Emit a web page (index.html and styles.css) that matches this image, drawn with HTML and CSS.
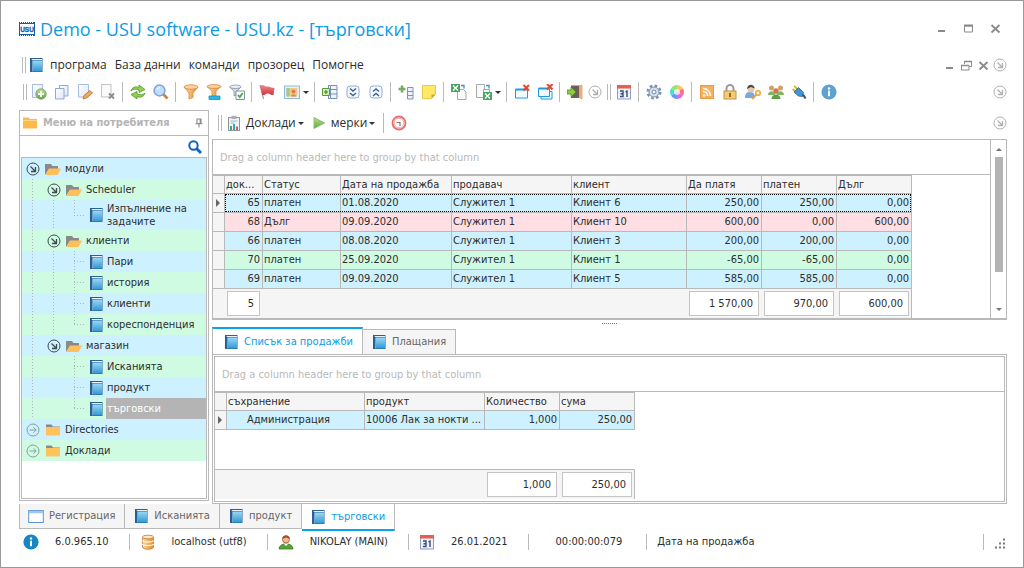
FILE: index.html
```html
<!DOCTYPE html>
<html lang="bg">
<head>
<meta charset="utf-8">
<title>Demo - USU software - USU.kz - [търговски]</title>
<link rel="stylesheet" href="styles.css">
</head>
<body>
<svg class="defs" aria-hidden="true">
  <defs>
    <linearGradient id="gBook" x1="0" y1="0" x2="0" y2="1"><stop offset="0" stop-color="#9ad8f5"/><stop offset="1" stop-color="#2f97d6"/></linearGradient>
    <linearGradient id="gOrange" x1="0" y1="0" x2="1" y2="0"><stop offset="0" stop-color="#ffd9a0"/><stop offset="1" stop-color="#ea8a2c"/></linearGradient>
    <linearGradient id="gGreen" x1="0" y1="0" x2="0" y2="1"><stop offset="0" stop-color="#b9e08a"/><stop offset="1" stop-color="#5da83a"/></linearGradient>
    <linearGradient id="gPage" x1="0" y1="0" x2="1" y2="1"><stop offset="0" stop-color="#fff"/><stop offset="1" stop-color="#dde6f5"/></linearGradient>
    <linearGradient id="gRed" x1="0" y1="0" x2="0" y2="1"><stop offset="0" stop-color="#f28a8a"/><stop offset="1" stop-color="#cf3340"/></linearGradient>
    <symbol id="book" viewBox="0 0 16 16"><rect x="2" y="1" width="12.500" height="14" fill="#2a5f95"/><rect x="5" y="3.500" width="9" height="11" fill="url(#gBook)"/><path d="M3.500 2h10.500v1h-10z" fill="#e8f4fb"/><path d="M4.500 3.500v11" stroke="#8cb9dc" stroke-width=".8"/></symbol>
    <symbol id="open" viewBox="0 0 16 14"><path d="M0 13V2h6l1.500 2H13v3H4z" fill="#8a8a8a"/><path d="M4 6.500h12L12.500 13H.5z" fill="#ffbf5a"/></symbol>
    <symbol id="folder" viewBox="0 0 16 14"><path d="M1 5V1.500h5.500l1.500 2h7V5z" fill="#8a8a8a"/><path d="M1 4h14v8.500H1z" fill="#ffc25c"/></symbol>
    <symbol id="folderY" viewBox="0 0 16 14"><path d="M1 12.500V1.500h5.500l1.500 1.500h7v9.500z" fill="#fdb94c"/><path d="M1 4.500h14" stroke="#ffd58a"/></symbol>
    <symbol id="down" viewBox="0 0 14 14"><circle cx="7" cy="7" r="6" fill="none" stroke="currentColor"/><path d="M4.500 4.500l4.500 4.500M9.500 5v4.500H5" fill="none" stroke="currentColor" stroke-width="1.300"/></symbol>
    <symbol id="right" viewBox="0 0 14 14"><circle cx="7" cy="7" r="6" fill="none" stroke="currentColor"/><path d="M3.500 7h6.500M7.500 4.300L10.200 7 7.500 9.700" fill="none" stroke="currentColor"/></symbol>
    <symbol id="min" viewBox="0 0 11 11"><path d="M2 8h7" stroke="#8a8a8a" stroke-width="2"/></symbol>
    <symbol id="max" viewBox="0 0 11 11"><path d="M1.500 2v7h8V2M1 3h9" fill="none" stroke="#8a8a8a"/><path d="M1 2.500h9" stroke="#8a8a8a" stroke-width="2"/></symbol>
    <symbol id="restore" viewBox="0 0 11 11"><path d="M3.500 4V1.500h7v5H8M1 5.500h7v4.500H.5V5z" fill="none" stroke="#8a8a8a"/><path d="M3 1.500h8M0 5.500h8" stroke="#8a8a8a" stroke-width="1.500"/></symbol>
    <symbol id="close" viewBox="0 0 11 11"><path d="M1.500 2l8 7.500M9.500 2l-8 7.500" stroke="#8a8a8a" stroke-width="1.800"/></symbol>
    <symbol id="add" viewBox="0 0 16 16"><path d="M1.500 .5h10v13h-10z" fill="url(#gPage)" stroke="#a9bbdf"/><circle cx="10" cy="10" r="5.200" fill="url(#gGreen)" stroke="#8aa888"/><path d="M10 7v6M7 10h6" stroke="#fff" stroke-width="2"/></symbol>
    <symbol id="copy" viewBox="0 0 16 16"><path d="M5.500 1.500h8.500v10.500H5.500z" fill="url(#gPage)" stroke="#93a9d3"/><path d="M1.500 4.500H10v10.500H1.500z" fill="url(#gPage)" stroke="#93a9d3"/></symbol>
    <symbol id="edit" viewBox="0 0 16 16"><path d="M1.500 .5h10v12.500h-10z" fill="url(#gPage)" stroke="#a9bbdf"/><path d="M6 15l1-3.500 6-5 2.500 2.500-6 5z" fill="#f3a95a" stroke="#a86d34" stroke-width=".8"/></symbol>
    <symbol id="del" viewBox="0 0 16 16"><path d="M1.500 .5H11v12.500H1.500z" fill="#fafafa" stroke="#c2c2c2"/><path d="M9 9.500l5 5M14 9.500l-5 5" stroke="#8d8d8d" stroke-width="2"/></symbol>
    <symbol id="refresh" viewBox="0 0 16 16"><path d="M1 7c1-4 5-5 8-3.500V1l6 4.500-6 3V6C6 4.800 3 5 1 7z" fill="#92d050" stroke="#4f9a28" stroke-width=".8"/><path d="M15 9c-1 4-5 5-8 3.500V15L1 10.500l6-3V10c3 1.200 6 1 8-1z" fill="#92d050" stroke="#4f9a28" stroke-width=".8"/></symbol>
    <symbol id="loupe" viewBox="0 0 16 16"><path d="M9.500 9.500l5 5" stroke="#c48447" stroke-width="2.600"/><circle cx="6.500" cy="6.500" r="5.400" fill="#bfe0fb" stroke="#7fa2da" stroke-width="1.500"/><path d="M4 6a3 3 0 0 1 3-2.500" stroke="#fff" fill="none"/></symbol>
    <symbol id="funnel" viewBox="0 0 16 16"><path d="M1 3L6 9v6l4-1.500V9L15 3z" fill="url(#gOrange)" stroke="#d28a45" stroke-width=".8"/><ellipse cx="8" cy="3" rx="7" ry="2.200" fill="#ffd0a0" stroke="#d28a45" stroke-width=".8"/></symbol>
    <symbol id="funnel2" viewBox="0 0 16 16"><path d="M1 2.500L6 7v5h4V7l5-4.500z" fill="url(#gOrange)" stroke="#d28a45" stroke-width=".8"/><ellipse cx="8" cy="2.500" rx="7" ry="1.900" fill="#ffd0a0" stroke="#d28a45" stroke-width=".8"/><path d="M3 12h11v3.500H3z" fill="#29b6e8" stroke="#1790bd" stroke-width=".8"/></symbol>
    <symbol id="funnel3" viewBox="0 0 16 16"><path d="M.8 3L5 7.500V12l2.500-1V7.500L12 3z" fill="#d3d8de" stroke="#8292a8" stroke-width=".8"/><ellipse cx="6.400" cy="2.800" rx="5.600" ry="1.700" fill="#edf0f4" stroke="#8292a8" stroke-width=".8"/><path d="M7 7h8.500v8.500H7z" fill="#fff" stroke="#7f92ab"/><path d="M9 11l1.800 2 3-4" fill="none" stroke="#3fae38" stroke-width="1.800"/></symbol>
    <symbol id="flag" viewBox="0 0 16 16"><path d="M1 1l3.500 14" stroke="#9d9d9d" stroke-width="1.200"/><path d="M1 1.500c3-2 5 1.500 8 1 2 0 3 1.500 6.500 1.500l-1 7c-3 .5-4-2-6-1.500-2 .3-3 2-5.200 1.500z" fill="url(#gRed)"/></symbol>
    <symbol id="pic" viewBox="0 0 16 16"><rect x=".5" y="2" width="15" height="12.500" fill="#e4f2ff" stroke="#8fb9e0"/><rect x="2.500" y="4" width="11" height="8.500" fill="#f5c983"/><path d="M2.500 4h3v8.500h-3z" fill="#9cc98a"/><path d="M7 12.500c0-3 5-3 5 0z" fill="#d98b4b"/><circle cx="9.500" cy="7.500" r="2" fill="#dd8050"/></symbol>
    <symbol id="expand" viewBox="0 0 16 16"><path d="M8.500 1.500h6.500v13H8.500zM8.500 5.500h6.500M8.500 10h6.500M6 1.500h2M6 14.500h2M6.500 2v3M6.500 11v3" fill="#eef3fb" stroke="#7690bd"/><path d="M.5 4.500h7v7h-7z" fill="#d6efb9" stroke="#5b9b3b"/><path d="M4 6v4M2 8h4" stroke="#3f8a24" stroke-width="1.200"/></symbol>
    <symbol id="chD" viewBox="0 0 16 16"><rect x="2" y="2" width="12" height="12" rx="3" fill="#f4f9ff" stroke="#8fadd8"/><path d="M5 4.500L8 7l3-2.500M5 9l3 2.500L11 9" fill="none" stroke="#3f5f8e" stroke-width="1.400"/></symbol>
    <symbol id="chU" viewBox="0 0 16 16"><rect x="2" y="2" width="12" height="12" rx="3" fill="#f4f9ff" stroke="#8fadd8"/><path d="M5 7.500L8 5l3 2.500M5 12l3-2.500L11 12" fill="none" stroke="#3f5f8e" stroke-width="1.400"/></symbol>
    <symbol id="addcol" viewBox="0 0 16 16"><path d="M9.500 3.500h5.500v11.500H9.500zM9.500 7.500h5.500M9.500 11.500h5.500" fill="#eef1fb" stroke="#7f8fc4"/><path d="M4 1.500v7M.5 5h7" stroke="#7aab62" stroke-width="2.600"/></symbol>
    <symbol id="note" viewBox="0 0 16 16"><path d="M1.500 1.500h13v9l-4 4h-9z" fill="#ffe966" stroke="#e6ca4e"/><path d="M14.500 10.500h-4v4z" fill="#d6a92a"/></symbol>
    <symbol id="xls1" viewBox="0 0 16 16"><path d="M6.500 5.500h6l2.500 2.500v7.500H6.500z" fill="#fafafa" stroke="#a4a9ae"/><rect x="0" y="0" width="9" height="8" fill="#4aa564"/><path d="M2 1.500l5 5M7 1.500l-5 5" stroke="#fff" stroke-width="1.300"/><path d="M10 1.500h3v3" fill="none" stroke="#3b8ed0" stroke-width="1.300"/></symbol>
    <symbol id="xls2" viewBox="0 0 16 16"><path d="M.5 .5h8v13h-8z" fill="#fafafa" stroke="#a4a9ae"/><path d="M7.500 5.500h6v6h-6z" fill="#f3f3f3" stroke="#a4a9ae"/><rect x="7" y="8" width="9" height="8" fill="#4aa564"/><path d="M9 9.500l5 5M14 9.500l-5 5" stroke="#fff" stroke-width="1.300"/><path d="M10 1.500h3v3" fill="none" stroke="#3b8ed0" stroke-width="1.300"/></symbol>
    <symbol id="winx" viewBox="0 0 16 16"><path d="M1.500 5.500h12v8.500h-12z" fill="#f2faff" stroke="#1b9ae0"/><path d="M1.500 5.500h12" stroke="#1b9ae0" stroke-width="2"/><path d="M9.500 1l5.500 5.500M15 1L9.500 6.500" stroke="#dd4b33" stroke-width="2"/></symbol>
    <symbol id="winxs" viewBox="0 0 16 16"><path d="M4 7.500h11V15H4z" fill="#fff" stroke="#1b9ae0"/><path d="M1.500 4.500h11v8h-11z" fill="#f2faff" stroke="#1b9ae0"/><path d="M1.500 4.500h11" stroke="#1b9ae0" stroke-width="2"/><path d="M10 0l5.500 5.500M15.500 0L10 5.500" stroke="#dd4b33" stroke-width="2"/></symbol>
    <symbol id="exit" viewBox="0 0 16 16"><path d="M4 1.500h9v12.500H4z" fill="#6d5f57"/><path d="M12 1.500L15.500.5v15L12 14z" fill="#e3b07c"/><path d="M0 6h4V3l5 5-5 5v-3H0z" fill="#8bcf3d" stroke="#4d8c20" stroke-width=".8"/></symbol>
    <symbol id="cal" viewBox="0 0 16 16"><rect x="1.500" y="1.500" width="13" height="13.500" fill="#eef2fb" stroke="#8f9cc8"/><path d="M1 1h14v3.500H1z" fill="#e5604f"/><path d="M4 7h3v5.500H4M4.500 9.700H7M9.500 8l1.500-1v6" fill="none" stroke="#3d4d7c" stroke-width="1.400"/></symbol>
    <symbol id="gear" viewBox="0 0 16 16"><circle cx="8" cy="8" r="6.400" fill="none" stroke="#7b8fac" stroke-width="2.200" stroke-dasharray="2.700 2.300"/><circle cx="8" cy="8" r="5" fill="#d6e2f0" stroke="#7b8fac"/><circle cx="8" cy="8" r="2" fill="#fff" stroke="#6d85a8"/></symbol>
    <symbol id="pal" viewBox="0 0 16 16"><path d="M8 8V1a7 7 0 0 1 6 3.500z" fill="#ffc26b"/><path d="M8 8l6-3.500a7 7 0 0 1 0 7z" fill="#ff6f83"/><path d="M8 8l6 3.500A7 7 0 0 1 8 15z" fill="#e967dd"/><path d="M8 8v7a7 7 0 0 1-6-3.500z" fill="#6e93f5"/><path d="M8 8l-6 3.500a7 7 0 0 1 0-7z" fill="#45dcd9"/><path d="M8 8L2 4.500A7 7 0 0 1 8 1z" fill="#91e96a"/><circle cx="8" cy="8" r="3" fill="#fff" opacity=".7"/></symbol>
    <symbol id="rss" viewBox="0 0 16 16"><rect x="1.500" y="1.500" width="13" height="13" fill="#f9b05c" stroke="#e59a44"/><circle cx="5" cy="11.500" r="1.300" fill="#fff"/><path d="M4 7.500a4.500 4.500 0 0 1 4.500 4.500M4 4.500a7.500 7.500 0 0 1 7.500 7.500" fill="none" stroke="#fff" stroke-width="1.500"/></symbol>
    <symbol id="lock" viewBox="0 0 16 16"><path d="M4.500 8V4.500a3.500 3.500 0 0 1 7 0V8" fill="none" stroke="#9b9b9b" stroke-width="2"/><rect x="2" y="7" width="12" height="8" fill="#f6cb70" stroke="#c3924a"/><path d="M8 9v4" stroke="#6f562a" stroke-width="1.600"/></symbol>
    <symbol id="key" viewBox="0 0 16 16"><path d="M0 14c0-5 2-6 5-6s5 1 5 6z" fill="#77a9de"/><circle cx="6" cy="5" r="3.500" fill="#f1c59f"/><path d="M2 5C2.500-.5 9-.5 9.700 4.500L6 3z" fill="#444b55"/><circle cx="13" cy="9" r="2.200" fill="none" stroke="#f0a52b" stroke-width="1.600"/><path d="M11.500 10.500L8 14.500l-1-1" stroke="#f0a52b" stroke-width="1.800" fill="none"/></symbol>
    <symbol id="group" viewBox="0 0 16 16"><circle cx="3.500" cy="4" r="2.500" fill="#d99b6b"/><circle cx="12.500" cy="4" r="2.500" fill="#d99b6b"/><path d="M0 11c0-5 7-5 7 0zM9 11c0-5 7-5 7 0z" fill="#7fb764"/><circle cx="8" cy="7" r="2.700" fill="#c9774b"/><path d="M3.500 15c0-6 9-6 9 0z" fill="#5ea04a"/></symbol>
    <symbol id="plug" viewBox="0 0 16 16"><path d="M3 2l3.500 3M1.500 5L5 8" stroke="#e2b52e" stroke-width="1.800"/><path d="M7.500 3.500l5 5-1 4-4-.5-4.500-4z" fill="#3e97d4" stroke="#275f95" stroke-width=".8"/><path d="M12 10.500l2.500 4" stroke="#414d5b" stroke-width="2"/></symbol>
    <symbol id="info" viewBox="0 0 16 16"><circle cx="8" cy="8" r="7.600" fill="currentColor"/><circle cx="8" cy="4.500" r="1.200" fill="#fff"/><path d="M8 6.700v5.500" stroke="#fff" stroke-width="2"/></symbol>
    <symbol id="report" viewBox="0 0 16 16"><rect x="2.500" y="2.500" width="11" height="13" fill="#f1f3f5" stroke="#8d959d"/><rect x="5.500" y=".8" width="5" height="3.200" fill="#a8afb6"/><path d="M4.500 6h7M4.500 8h4" stroke="#b2b8be"/><path d="M5 11v4" stroke="#49a84b" stroke-width="2"/><path d="M8 9v6" stroke="#2aa7dd" stroke-width="2"/><path d="M11 11.500V15" stroke="#e0584d" stroke-width="2"/></symbol>
    <symbol id="play" viewBox="0 0 16 16"><path d="M3 2.500l10.500 5.500L3 13.500z" fill="url(#gGreen)" stroke="#8cbb74"/></symbol>
    <symbol id="clock" viewBox="0 0 16 16"><circle cx="8" cy="8" r="6.500" fill="#fff" stroke="#e0706a" stroke-width="1.800"/><circle cx="8" cy="8" r="4.800" fill="none" stroke="#f0a5a0"/><path d="M5.500 7.500h3.500V11" fill="none" stroke="#9a6b68" stroke-width="1.200"/></symbol>
    <symbol id="window" viewBox="0 0 16 16"><rect x=".7" y="2.500" width="14.600" height="12" fill="#fff" stroke="#5f93cc"/><path d="M1.200 4h13.600" stroke="#9cc7ee" stroke-width="2.500"/></symbol>
    <symbol id="db" viewBox="0 0 16 16"><path d="M2.500 3v10c0 3 11 3 11 0V3z" fill="url(#gOrange)" stroke="#c07c36" stroke-width=".8"/><ellipse cx="8" cy="3" rx="5.500" ry="1.800" fill="#ffe9c6" stroke="#c07c36" stroke-width=".8"/><path d="M2.500 6.500c1 2 10 2 11 0M2.500 10c1 2 10 2 11 0" fill="none" stroke="#fff" stroke-width="1.200"/></symbol>
    <symbol id="user" viewBox="0 0 16 16"><path d="M1 15c0-7 14-7 14 0z" fill="#57a339" stroke="#3b7a26" stroke-width=".8"/><path d="M5.500 9.500l2.500 2.500 2.500-2.500z" fill="#fff"/><circle cx="8" cy="5.500" r="3.500" fill="#f0b98a" stroke="#9a5c38" stroke-width=".8"/><path d="M4.300 5C4 0 12 0 11.700 5L8 3.500z" fill="#a0522d"/></symbol>
    <symbol id="pin" viewBox="0 0 10 10"><path d="M3 1h4v4.500H3zM1.500 5.800h7M5 6v3.500M6.200 1v4.500" fill="none" stroke="#8a8a8a" stroke-width="1.100"/></symbol>
    <symbol id="search" viewBox="0 0 14 14"><circle cx="5.500" cy="5.500" r="4.200" fill="none" stroke="#0b64c0" stroke-width="2"/><path d="M8.500 8.500l4.500 4.500" stroke="#0b64c0" stroke-width="2.800"/></symbol>
    <symbol id="logo" viewBox="0 0 16 16"><path d="M.5 1v14M15.500 1v14M0 2.500h16M0 13.500h16" stroke="#0f5fae"/><path d="M0 1.500h16M0 14.500h16" stroke="#0f5fae" stroke-dasharray="1 1"/><rect x="1" y="3" width="14" height="10" fill="#fff"/><text x="8" y="10.500" text-anchor="middle" font-family="Liberation Sans" font-size="6.500" font-weight="700" fill="#0f5fae" stroke="#0f5fae" stroke-width=".3">USU</text></symbol>
    <symbol id="size" viewBox="0 0 12 12"><path d="M9 1.500h2M9 5.500h2M5 5.500h2M9 9.500h2M5 9.500h2M1 9.500h2" stroke="#777" stroke-width="2"/></symbol>
  </defs>
</svg>

<div class="window">
  <header class="titlebar">
    <svg class="ico logo"><use href="#logo"/></svg>
    <h1>Demo - USU software - USU.kz - [търговски]</h1>
    <div class="winctl">
      <button aria-label="Minimize"><svg><use href="#min"/></svg></button>
      <button aria-label="Maximize"><svg><use href="#max"/></svg></button>
      <button aria-label="Close"><svg><use href="#close"/></svg></button>
    </div>
  </header>

  <nav class="menubar">
    <span class="grip"></span>
    <svg class="ico"><use href="#book"/></svg>
    <button>програма</button><button>База данни</button><button>команди</button><button>прозорец</button><button>Помогне</button>
    <div class="mdictl">
      <button aria-label="Minimize"><svg><use href="#min"/></svg></button>
      <button aria-label="Restore"><svg><use href="#restore"/></svg></button>
      <button aria-label="Close"><svg><use href="#close"/></svg></button>
      <button class="more" aria-label="More"><svg><use href="#down"/></svg></button>
    </div>
  </nav>

  <div class="toolbar">
    <span class="grip"></span>
    <button class="tb" aria-label="Add"><svg class="ico"><use href="#add"/></svg></button>
    <button class="tb" aria-label="Copy"><svg class="ico"><use href="#copy"/></svg></button>
    <button class="tb" aria-label="Edit"><svg class="ico"><use href="#edit"/></svg></button>
    <button class="tb" aria-label="Delete"><svg class="ico"><use href="#del"/></svg></button>
    <span class="sep"></span>
    <button class="tb" aria-label="Refresh"><svg class="ico"><use href="#refresh"/></svg></button>
    <button class="tb" aria-label="Find"><svg class="ico"><use href="#loupe"/></svg></button>
    <span class="sep"></span>
    <button class="tb" aria-label="Filter"><svg class="ico"><use href="#funnel"/></svg></button>
    <button class="tb" aria-label="Filter row"><svg class="ico"><use href="#funnel2"/></svg></button>
    <button class="tb" aria-label="Filter by value"><svg class="ico"><use href="#funnel3"/></svg></button>
    <span class="sep"></span>
    <button class="tb" aria-label="Flag"><svg class="ico"><use href="#flag"/></svg></button>
    <button class="tb drop" aria-label="Image"><svg class="ico"><use href="#pic"/></svg><span class="caret"></span></button>
    <span class="sep"></span>
    <button class="tb" aria-label="Groups"><svg class="ico"><use href="#expand"/></svg></button>
    <button class="tb" aria-label="Expand all"><svg class="ico"><use href="#chD"/></svg></button>
    <button class="tb" aria-label="Collapse all"><svg class="ico"><use href="#chU"/></svg></button>
    <span class="sep"></span>
    <button class="tb" aria-label="Columns"><svg class="ico"><use href="#addcol"/></svg></button>
    <button class="tb" aria-label="Note"><svg class="ico"><use href="#note"/></svg></button>
    <span class="sep"></span>
    <button class="tb" aria-label="Import"><svg class="ico"><use href="#xls1"/></svg></button>
    <button class="tb drop" aria-label="Export"><svg class="ico"><use href="#xls2"/></svg><span class="caret"></span></button>
    <span class="sep"></span>
    <button class="tb" aria-label="Close window"><svg class="ico"><use href="#winx"/></svg></button>
    <button class="tb" aria-label="Close all windows"><svg class="ico"><use href="#winxs"/></svg></button>
    <span class="sep"></span>
    <button class="tb" aria-label="Exit"><svg class="ico"><use href="#exit"/></svg></button>
    <button class="more mid" aria-label="More"><svg><use href="#down"/></svg></button>
    <span class="grip"></span>
    <button class="tb" aria-label="Calendar"><svg class="ico"><use href="#cal"/></svg></button>
    <span class="sep"></span>
    <button class="tb" aria-label="Settings"><svg class="ico"><use href="#gear"/></svg></button>
    <button class="tb" aria-label="Colors"><svg class="ico"><use href="#pal"/></svg></button>
    <span class="sep"></span>
    <button class="tb" aria-label="News"><svg class="ico"><use href="#rss"/></svg></button>
    <button class="tb" aria-label="Lock"><svg class="ico"><use href="#lock"/></svg></button>
    <button class="tb" aria-label="Password"><svg class="ico"><use href="#key"/></svg></button>
    <button class="tb" aria-label="Users"><svg class="ico"><use href="#group"/></svg></button>
    <button class="tb" aria-label="Connection"><svg class="ico"><use href="#plug"/></svg></button>
    <span class="sep"></span>
    <button class="tb about" aria-label="About"><svg class="ico"><use href="#info"/></svg></button>
    <button class="more last" aria-label="More"><svg><use href="#down"/></svg></button>
  </div>

  <div class="work">
    <aside class="side">
      <div class="side-head"><svg class="ico fold"><use href="#folderY"/></svg><h2>Меню на потребителя</h2><button aria-label="Pin"><svg class="pin"><use href="#pin"/></svg></button></div>
      <div class="side-search"><input type="text" aria-label="Search"><button aria-label="Search"><svg class="glass"><use href="#search"/></svg></button></div>
      <ul class="tree">
        <li><button class="tg" aria-label="Collapse"><svg><use href="#down"/></svg></button><span class="ic"><svg class="fold"><use href="#open"/></svg></span><span class="tx">модули</span></li>
        <li><i class="v"></i><button class="tg" aria-label="Collapse"><svg><use href="#down"/></svg></button><span class="ic"><svg class="fold"><use href="#open"/></svg></span><span class="tx">Scheduler</span></li>
        <li><i class="v"></i><i class="v"></i><i class="e"></i><span class="ic"><svg class="ico"><use href="#book"/></svg></span><span class="tx">Изпълнение на задачите</span></li>
        <li><i class="v"></i><button class="tg" aria-label="Collapse"><svg><use href="#down"/></svg></button><span class="ic"><svg class="fold"><use href="#open"/></svg></span><span class="tx">клиенти</span></li>
        <li><i class="v"></i><i class="v"></i><i class="v h"></i><span class="ic"><svg class="ico"><use href="#book"/></svg></span><span class="tx">Пари</span></li>
        <li><i class="v"></i><i class="v"></i><i class="v h"></i><span class="ic"><svg class="ico"><use href="#book"/></svg></span><span class="tx">история</span></li>
        <li><i class="v"></i><i class="v"></i><i class="v h"></i><span class="ic"><svg class="ico"><use href="#book"/></svg></span><span class="tx">клиенти</span></li>
        <li><i class="v"></i><i class="v"></i><i class="e"></i><span class="ic"><svg class="ico"><use href="#book"/></svg></span><span class="tx">кореспонденция</span></li>
        <li><i class="v"></i><button class="tg" aria-label="Collapse"><svg><use href="#down"/></svg></button><span class="ic"><svg class="fold"><use href="#open"/></svg></span><span class="tx">магазин</span></li>
        <li><i class="v"></i><i></i><i class="v h"></i><span class="ic"><svg class="ico"><use href="#book"/></svg></span><span class="tx">Исканията</span></li>
        <li><i class="v"></i><i></i><i class="v h"></i><span class="ic"><svg class="ico"><use href="#book"/></svg></span><span class="tx">продукт</span></li>
        <li><i class="v"></i><i></i><i class="e"></i><span class="ic"><svg class="ico"><use href="#book"/></svg></span><span class="tx sel">търговски</span></li>
        <li><button class="tg off" aria-label="Expand"><svg><use href="#right"/></svg></button><span class="ic"><svg class="fold"><use href="#folder"/></svg></span><span class="tx">Directories</span></li>
        <li><button class="tg off" aria-label="Expand"><svg><use href="#right"/></svg></button><span class="ic"><svg class="fold"><use href="#folder"/></svg></span><span class="tx">Доклади</span></li>
      </ul>
    </aside>

    <main class="content">
      <div class="subbar">
        <span class="grip"></span>
        <button class="txt"><svg class="ico"><use href="#report"/></svg>Доклади<span class="caret"></span></button>
        <button class="txt"><svg class="ico"><use href="#play"/></svg>мерки<span class="caret"></span></button>
        <span class="sep"></span>
        <button class="tb" aria-label="Timer"><svg class="ico"><use href="#clock"/></svg></button>
        <button class="more last" aria-label="More"><svg><use href="#down"/></svg></button>
      </div>

      <section class="grid main-grid">
        <div class="grid-body">
          <div class="group-panel">Drag a column header here to group by that column</div>
          <table class="sales">
            <colgroup><col class="c-mark"><col class="c-doc"><col class="c-st"><col class="c-date"><col class="c-sel"><col class="c-cli"><col class="c-num"><col class="c-num"><col class="c-num"></colgroup>
            <thead><tr><th></th><th>док...</th><th>Статус</th><th>Дата на продажба</th><th>продавач</th><th>клиент</th><th>Да платя</th><th>платен</th><th>Дълг</th></tr></thead>
            <tbody>
              <tr class="blue cur"><th><span class="mark"></span></th><td class="n">65</td><td>платен</td><td>01.08.2020</td><td>Служител 1</td><td>Клиент 6</td><td class="n">250,00</td><td class="n">250,00</td><td class="n">0,00</td></tr>
              <tr class="pink"><th></th><td class="n">68</td><td>Дълг</td><td>09.09.2020</td><td>Служител 1</td><td>Клиент 10</td><td class="n">600,00</td><td class="n">0,00</td><td class="n">600,00</td></tr>
              <tr class="blue"><th></th><td class="n">66</td><td>платен</td><td>08.08.2020</td><td>Служител 1</td><td>Клиент 3</td><td class="n">200,00</td><td class="n">200,00</td><td class="n">0,00</td></tr>
              <tr class="green"><th></th><td class="n">70</td><td>платен</td><td>25.09.2020</td><td>Служител 1</td><td>Клиент 1</td><td class="n">-65,00</td><td class="n">-65,00</td><td class="n">0,00</td></tr>
              <tr class="blue"><th></th><td class="n">69</td><td>платен</td><td>09.09.2020</td><td>Служител 1</td><td>Клиент 5</td><td class="n">585,00</td><td class="n">585,00</td><td class="n">0,00</td></tr>
            </tbody>
            <tfoot><tr><td></td><td><div class="sum">5</div></td><td colspan="4"></td><td><div class="sum">1 570,00</div></td><td><div class="sum">970,00</div></td><td><div class="sum">600,00</div></td></tr></tfoot>
          </table>
        </div>
        <div class="scroll"><button class="up" aria-label="Up"></button><span class="thumb"></span><button class="dn" aria-label="Down"></button></div>
      </section>
      <div class="splitter"></div>

      <div class="tabs" role="tablist">
        <button class="tab on" role="tab" aria-selected="true"><svg class="ico"><use href="#book"/></svg>Списък за продажби</button>
        <button class="tab" role="tab"><svg class="ico"><use href="#book"/></svg>Плащания</button>
      </div>
      <section class="page">
        <div class="grid detail">
          <div class="group-panel">Drag a column header here to group by that column</div>
          <table class="items">
            <colgroup><col class="c-mark"><col class="c-store"><col class="c-prod"><col class="c-num"><col class="c-num"></colgroup>
            <thead><tr><th></th><th>съхранение</th><th>продукт</th><th>Количество</th><th>сума</th></tr></thead>
            <tbody>
              <tr class="blue"><th><span class="mark"></span></th><td class="ind">Администрация</td><td>10006 Лак за нокти ...</td><td class="n">1,000</td><td class="n">250,00</td></tr>
              <tr class="blank"><td colspan="5"></td></tr>
            </tbody>
            <tfoot><tr><td colspan="3"></td><td><div class="sum">1,000</div></td><td><div class="sum">250,00</div></td></tr></tfoot>
          </table>
        </div>
      </section>
    </main>
  </div>

  <div class="wintabs" role="tablist">
    <button class="wt" role="tab"><svg class="ico"><use href="#window"/></svg>Регистрация</button>
    <button class="wt" role="tab"><svg class="ico"><use href="#book"/></svg>Исканията</button>
    <button class="wt" role="tab"><svg class="ico"><use href="#book"/></svg>продукт</button>
    <button class="wt on" role="tab" aria-selected="true"><svg class="ico"><use href="#book"/></svg>търговски</button>
  </div>

  <footer class="status">
    <span class="st first"><svg class="ico"><use href="#info"/></svg>6.0.965.10</span>
    <span class="st"><svg class="ico"><use href="#db"/></svg>localhost (utf8)</span>
    <span class="st"><svg class="ico"><use href="#user"/></svg>NIKOLAY (MAIN)</span>
    <span class="st"><svg class="ico"><use href="#cal"/></svg>26.01.2021</span>
    <span class="st wide">00:00:00:079</span>
    <span class="st grow">Дата на продажба</span>
    <svg class="size"><use href="#size"/></svg>
  </footer>
</div>
</body>
</html>
```
FILE: styles.css
```css
* { box-sizing: border-box; }
body {
  margin: 0;
  background: #fff;
  color: #2d2d2d;
  font: 11px/14px "DejaVu Sans Condensed", "DejaVu Sans", sans-serif;
}
button {
  margin: 0;
  padding: 0;
  border: 0;
  background: none;
  color: inherit;
  font: inherit;
  display: flex;
  align-items: center;
  justify-content: center;
}
svg { display: block; flex: none; }
.defs { position: absolute; width: 0; height: 0; }
.ico { width: 16px; height: 16px; }
.fold { width: 16px; height: 14px; }

.window {
  display: flex;
  flex-direction: column;
  min-height: 100vh;
  padding: 0 16px 0 18px;
  border: 1px solid #999;
}

/* title bar */
.titlebar { display: flex; align-items: center; height: 55px; }
.titlebar h1 {
  margin: 0 0 0 5px;
  color: #0c9be6;
  font: 400 18px/24px "Open Sans", "Noto Sans", sans-serif;
}
.winctl { display: flex; gap: 16px; margin-left: auto; padding-right: 6px; }
.winctl svg, .mdictl svg { width: 11px; height: 11px; }

/* menu */
.menubar {
  display: flex;
  align-items: center;
  gap: 8px;
  height: 18px;
  padding-left: 3px;
  font: 12px/18px "Open Sans", "Noto Sans", sans-serif;
}
.menubar .ico { margin: 0 -2px 0 -6px; }
.grip {
  flex: none;
  width: 4px;
  height: 16px;
  border: solid #b9b9b9;
  border-width: 0 1px;
}
.mdictl { display: flex; align-items: center; gap: 6px; margin-left: auto; }
.mdictl .more { margin-left: -2px; }
.more { color: #b0b0b0; }
.more svg, .mdictl .more svg { width: 14px; height: 14px; }
.last { margin-left: auto; }

/* toolbars */
.toolbar { display: flex; align-items: center; height: 36px; padding-left: 4px; }
.tb { width: 23px; height: 22px; }
.drop { width: 33px; gap: 3px; padding-left: 3px; }
.sep { flex: none; width: 7px; height: 20px; background: linear-gradient(#b9b9b9, #b9b9b9) center / 1px 100% no-repeat; }
.caret { border: 3px solid transparent; border-top-color: #333; border-bottom: 0; }
.mid { margin-left: 2px; }
.toolbar .grip ~ .grip { margin: 0 1px 0 5px; }
.about { color: #5fa2cf; }

.work { display: grid; grid-template-columns: 190px 1fr; gap: 3px; flex: 1; }

/* side panel */
.side { border: 1px solid #b9b9b9; margin-bottom: 3px; display: flex; flex-direction: column; }
.side-head { display: flex; align-items: center; height: 25px; padding: 0 4px 0 2px; border-bottom: 1px solid #b9b9b9; }
.side-head h2 { flex: 1; margin: 0 0 0 5px; color: #b4b4b4; font: 700 11px/14px "DejaVu Sans Condensed", "DejaVu Sans", sans-serif; }
.pin { width: 10px; height: 10px; }
.side-search { display: flex; align-items: center; height: 21px; padding: 0 6px 0 2px; }
.side-search input { flex: 1; min-width: 0; border: 0; padding: 0; background: none; font: inherit; outline: 0; }
.glass { width: 14px; height: 14px; }
.tree { flex: 1; list-style: none; margin: 0 1px 1px; padding: 0; border: 1px solid #b9b9b9; }
.tree li { display: flex; align-items: stretch; min-height: 21px; background: #cdf1fe; }
.tree li:nth-child(even) { background: #d0fbe3; }
.tree i, .tg, .ic { flex: none; width: 21px; }
.tree svg { margin: auto; }
.tree .fold { margin-left: 2px; }
.tg { color: #3d4a4f; }
.tg.off { color: #86a09c; }
.tg svg { width: 14px; height: 14px; }
.ic { display: flex; }
.tx { flex: 1; display: flex; align-items: center; padding: 2px 12px 2px 1px; line-height: 13px; }
.tx.sel { background: #b4b4b4; color: #fff; }
.v { background: repeating-linear-gradient(#a9b9bd 0 1px, transparent 1px 3px) 10px 0 / 1px 100% no-repeat; }
.v.h {
  background:
    repeating-linear-gradient(#a9b9bd 0 1px, transparent 1px 3px) 10px 0 / 1px 100% no-repeat,
    repeating-linear-gradient(90deg, #a9b9bd 0 1px, transparent 1px 3px) 10px 50% / 11px 1px no-repeat;
}
.e {
  background:
    repeating-linear-gradient(#a9b9bd 0 1px, transparent 1px 3px) 10px 0 / 1px 50% no-repeat,
    repeating-linear-gradient(90deg, #a9b9bd 0 1px, transparent 1px 3px) 10px 50% / 11px 1px no-repeat;
}

/* document area */
.content { display: flex; flex-direction: column; min-width: 0; }
.subbar { display: flex; align-items: center; height: 29px; padding: 0 0 3px 6px; font: 12px/18px "Open Sans", "Noto Sans", sans-serif; }
.txt { gap: 4px; margin-left: 4px; height: 22px; }
.txt + .txt { margin-left: 7px; }
.txt .caret { margin-left: -2px; }
.subbar .sep { margin-left: 5px; }

.grid { border: 1px solid #b9b9b9; }
.main-grid { display: flex; border-bottom-width: 2px; }
.grid-body { flex: 1; min-width: 0; }
.group-panel { height: 35px; padding: 11px 7px 0; border-bottom: 1px solid #b9b9b9; color: #b9b9b9; }
table { table-layout: fixed; border-collapse: separate; border-spacing: 0; }
.sales { width: 698px; }
.items { width: 420px; }
.c-mark { width: 12px; }
.c-doc { width: 38px; }
.c-st { width: 78px; }
.c-date { width: 111px; }
.c-sel { width: 120px; }
.c-cli { width: 115px; }
.c-num { width: 75px; }
.c-store { width: 138px; }
.c-prod { width: 120px; }
th, td {
  height: 19px;
  padding: 0 2px 0 1px;
  border: solid #b9b9b9;
  border-width: 0 1px 1px 0;
  font-weight: 400;
  text-align: left;
  white-space: nowrap;
  overflow: hidden;
}
th { background: #f5f5f5; }
thead th { border-top-width: 1px; }
.n { text-align: right; }
.ind { padding-left: 20px; }
.mark { display: block; width: 4px; margin: 0 auto; border: 4px solid transparent; border-left-color: #666; border-right: 0; }
.blue td { background: #cdf1fe; }
.pink td { background: #ffdfe3; }
.green td { background: #d0fbe3; }
.cur { position: relative; }
.cur::after { content: ""; position: absolute; inset: 0 1px 1px 12px; border: 1px dotted #000; }
.blank td { height: 40px; border-right: 0; }
tfoot td { height: 29px; padding: 0 3px 0 2px; border-width: 0; background: #f5f5f5; }
tfoot td:last-child { border-right-width: 1px; padding-right: 2px; }
.sum { height: 25px; padding: 5px 5px 0 0; border: 1px solid #c4c4c4; background: #fff; text-align: right; }

.scroll { flex: none; display: flex; flex-direction: column; align-items: center; width: 16px; border-left: 1px solid #b9b9b9; padding: 6px 0; }
.scroll button { width: 12px; height: 6px; }
.up::before, .dn::before { content: ""; border: 3px solid transparent; }
.up::before { border-bottom-color: #777; border-top: 0; }
.dn::before { border-top-color: #777; border-bottom: 0; }
.thumb { flex: none; width: 8px; height: 115px; margin: 5px 0 auto; background: #b4b4b4; }

.splitter { height: 7px; background: repeating-linear-gradient(90deg, #777 0 1px, transparent 1px 2px) center 3px / 16px 1px no-repeat; }

/* detail tabs */
.tabs { display: flex; align-items: flex-end; margin-bottom: -1px; }
.tab { gap: 5px; height: 26px; padding: 0 9px 0 8px; border: 1px solid #b9b9b9; background: #f5f5f5; color: #666; }
.tab + .tab { border-left: 0; }
.tab.on { height: 28px; padding-left: 10px; border-top: 2px solid #06a4ee; border-bottom-color: #fff; background: #fff; color: #0c9be6; }
.page { flex: 1; display: flex; padding: 1px; border: 1px solid #b9b9b9; }
.detail { flex: 1; }

/* window tabs */
.wintabs { display: flex; align-items: flex-start; }
.wt { gap: 5px; height: 25px; padding: 0 9px 0 8px; border: 1px solid #b9b9b9; border-top: 0; background: #f5f5f5; color: #666; }
.wt + .wt { border-left: 0; }
.wt.on { height: 27px; border-bottom: 2px solid #06a4ee; background: #fff; color: #0c9be6; }

/* status bar */
.status { display: flex; align-items: center; height: 36px; padding: 3px 1px 17px 0; }
.st { display: flex; align-items: center; gap: 16px; height: 16px; padding: 0 20px 0 10px; border-right: 1px solid #b9b9b9; white-space: nowrap; }
.st.first { padding-left: 4px; }
.first .ico { color: #1787c2; }
.st.wide { padding: 0 24px 0 27px; }
.st.grow { flex: 1; }
.size { width: 12px; height: 12px; margin: 4px 0 0 10px; }
```
